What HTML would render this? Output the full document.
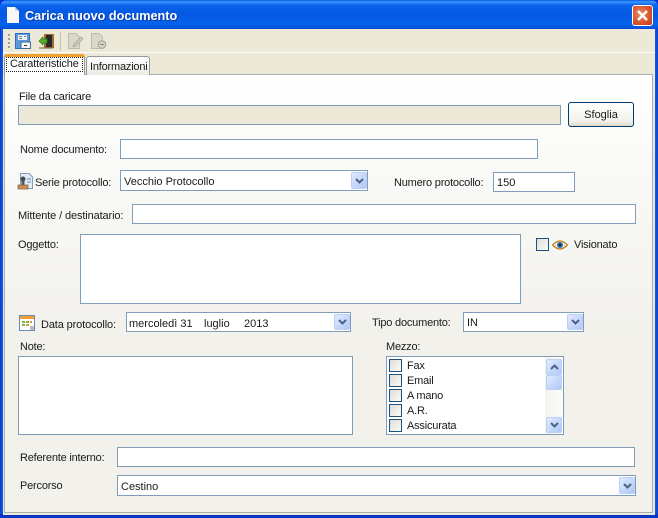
<!DOCTYPE html>
<html><head><meta charset="utf-8"><style>
html,body{margin:0;padding:0;width:658px;height:518px;overflow:hidden;background:#0831d9}
*{box-sizing:border-box}
body{position:relative;font:11px/14px "Liberation Sans",sans-serif;color:#1a1a1a}
.a{position:absolute}
.t{position:absolute;white-space:nowrap;letter-spacing:-.2px}
.i{position:absolute;background:#fff;border:1px solid #7f9db9}
.b{position:absolute;width:16px;background:linear-gradient(135deg,#e1eafe,#aec8f7);border:1px solid #bcd0f5;border-radius:2px}
.b svg{position:absolute;left:3px;top:50%;margin-top:-3px}
.c{position:absolute;width:13px;height:13px;border:1px solid #1c5180;background:linear-gradient(135deg,#dcdcd7,#fbfbf9)}
</style></head><body>
<div class="a" style="left:0;top:0;width:658px;height:30px;border-radius:7px 7px 0 0;background:linear-gradient(180deg,#0a5be0 0,#3d95ff 2px,#0a64ea 5px,#0558e2 14px,#0562ee 24px,#0553dc 28px,#0340c8 30px)"></div>
<div class="a" style="left:0;top:29px;width:4px;height:489px;background:linear-gradient(90deg,#0a3ed0,#1668f0)"></div>
<div class="a" style="left:654px;top:29px;width:4px;height:489px;background:linear-gradient(90deg,#1668f0,#0a3ed0)"></div>
<div class="a" style="left:0;top:514px;width:658px;height:4px;background:#0a36c4"></div>
<div class="a" style="left:3px;top:29px;width:652px;height:486px;background:#ece9d8"></div>
<svg class="a" style="left:6px;top:7px" width="14" height="17"><path d="M1 0H9L13 4V16H1Z" fill="#f8f8f8"/><path d="M9 0V4H13Z" fill="#c8d4ea"/></svg>
<div class="t" style="left:25px;top:9px;font:bold 12.7px/15px 'Liberation Sans',sans-serif;letter-spacing:0;color:#fff;text-shadow:1px 1px #0f3a9e">Carica nuovo documento</div>
<div class="a" style="left:632px;top:5px;width:21px;height:21px;border:1px solid #fff;border-radius:3px;background:radial-gradient(circle at 40% 40%,#e88a68,#d6532a 60%,#c03a18)"><svg width="19" height="19" style="position:absolute;left:0;top:0"><path d="M5 5L14 14M14 5L5 14" stroke="#fff" stroke-width="2.4"/></svg></div>
<!-- toolbar -->
<div class="a" style="left:3px;top:52px;width:652px;height:1px;background:#fbfaf5"></div>
<svg class="a" style="left:7px;top:33px" width="4" height="16"><g fill="#a09e8c"><rect x="1" y="1" width="2" height="2"/><rect x="1" y="5" width="2" height="2"/><rect x="1" y="9" width="2" height="2"/><rect x="1" y="13" width="2" height="2"/></g></svg>
<svg class="a" style="left:15px;top:33px" width="16" height="16"><rect x=".5" y=".5" width="14" height="15" fill="#5a9be0" stroke="#2a6fb8"/><rect x="3" y="2" width="9" height="5" fill="#eef3fa"/><path d="M4 3.500H7M9 3.500H11M4 5.500H7" stroke="#778"/><rect x="6" y="9" width="9.500" height="6.500" fill="#f4f4f4" stroke="#48688c"/><path d="M9 12.500H12" stroke="#334"/></svg>
<svg class="a" style="left:38px;top:33px" width="17" height="16"><rect x="6" y="1" width="10" height="14" fill="#a86a28"/><rect x="8" y="2" width="6" height="12" fill="#26282c"/><path d="M1 15H15" stroke="#7a5a38"/><path d="M1 8L5 4V6H9V10H5V12Z" fill="#55b02a" stroke="#2f7a16" stroke-width=".7"/></svg>
<div class="a" style="left:60px;top:32px;width:1px;height:19px;background:#c5c2b0"></div>
<svg class="a" style="left:67px;top:33px" width="17" height="16"><path d="M1.500.5H9L12.500 4V15.500H1.500Z" fill="#dad8cb" stroke="#bdbbab"/><path d="M7 11L14 4L16 6L9 13L6 14Z" fill="#cbc9ba" stroke="#aaa89a" stroke-width=".7"/></svg>
<svg class="a" style="left:90px;top:33px" width="17" height="16"><path d="M1.500.5H9L12.500 4V15.500H1.500Z" fill="#dad8cb" stroke="#bdbbab"/><circle cx="12" cy="11.500" r="3.800" fill="#d4d2c4" stroke="#a5a395"/><path d="M10 11.500H14" stroke="#8f8d80"/></svg>
<!-- panel -->
<div class="a" style="left:4px;top:74px;width:649px;height:439px;border:1px solid #a8b0b0;background:linear-gradient(180deg,#fff 0,#f9f9f7 100px,#f2f1ec 260px,#f2f1ec 100%)"></div>
<!-- tabs -->
<div class="a" style="left:86px;top:56px;width:64px;height:19px;border:1px solid #919b9c;border-bottom:none;border-radius:3px 3px 0 0;background:linear-gradient(180deg,#fff,#ecebe5)"></div>
<div class="t" style="left:90px;top:60px">Informazioni</div>
<div class="a" style="left:4px;top:54px;width:81px;height:21px;background:#fff;border:1px solid #919b9c;border-bottom:none;border-top:none;border-radius:3px 3px 0 0"></div>
<div class="a" style="left:4px;top:54px;width:81px;height:3px;background:#f0a030;border-radius:3px 3px 0 0"></div>
<div class="a" style="left:6px;top:57px;width:77px;height:15px;border:1px dotted #222"></div>
<div class="t" style="left:10px;top:57px;letter-spacing:-.15px">Caratteristiche</div>
<!-- fields -->
<div class="t" style="left:19px;top:90px">File da caricare</div>
<div class="i" style="left:18px;top:105px;width:543px;height:20px;background:#ece9d8"></div>
<div class="a" style="left:568px;top:102px;width:66px;height:25px;border:1px solid #003c74;border-radius:3px;background:linear-gradient(180deg,#fff,#f2f1ea 80%,#dcd8c8);text-align:center;line-height:24px">Sfoglia</div>
<div class="t" style="left:20px;top:143px">Nome documento:</div>
<div class="i" style="left:120px;top:139px;width:418px;height:20px"></div>
<svg class="a" style="left:17px;top:173px" width="16" height="17"><path d="M3.500.5H12L15.500 4V15.500H3.500Z" fill="#e4ecf8" stroke="#7f9db9"/><path d="M10 6H14M10 9H14" stroke="#5a8ac8"/><circle cx="6" cy="6" r="2.500" fill="#4a4a50"/><rect x="4.500" y="7" width="3" height="5" fill="#55555a"/><rect x="1" y="12" width="10" height="4" fill="#c89058" stroke="#8a5a28" stroke-width=".7"/></svg>
<div class="t" style="left:35px;top:176px">Serie protocollo:</div>
<div class="i" style="left:120px;top:170px;width:248px;height:21px"><div class="t" style="left:3px;top:4px;letter-spacing:0">Vecchio Protocollo</div><div class="b" style="left:230px;top:1px;height:17px"><svg width="9" height="6"><path d="M1 1L4.500 4.500L8 1" fill="none" stroke="#4d6185" stroke-width="2"/></svg></div></div>
<div class="t" style="left:394px;top:176px">Numero protocollo:</div>
<div class="i" style="left:493px;top:172px;width:82px;height:20px"><div class="t" style="left:3px;top:3px;letter-spacing:0">150</div></div>
<div class="t" style="left:18px;top:209px;letter-spacing:-.12px">Mittente / destinatario:</div>
<div class="i" style="left:132px;top:204px;width:504px;height:20px"></div>
<div class="t" style="left:18px;top:238px">Oggetto:</div>
<div class="i" style="left:80px;top:234px;width:441px;height:70px"></div>
<div class="c" style="left:536px;top:238px"></div>
<svg class="a" style="left:552px;top:239px" width="16" height="12"><path d="M.7 6Q8-2 15.300 6Q8 14 .7 6Z" fill="#f6efe0" stroke="#c08020" stroke-width="1.300"/><circle cx="8" cy="6" r="3" fill="#2f6aa0"/><circle cx="8" cy="6" r="1.200" fill="#123"/></svg>
<div class="t" style="left:574px;top:238px">Visionato</div>
<svg class="a" style="left:19px;top:315px" width="16" height="16"><rect x=".5" y=".5" width="15" height="15" fill="#fff" stroke="#6a8ab8"/><rect x="1" y="1" width="14" height="3" fill="#f0a030"/><g fill="#8ab04a"><rect x="3" y="6" width="3" height="2"/><rect x="7" y="6" width="3" height="2"/><rect x="3" y="9" width="3" height="2"/></g><g fill="#c9a832"><rect x="11" y="6" width="2" height="2"/><rect x="7" y="9" width="3" height="2"/></g><rect x="11" y="11" width="4" height="4" fill="#bbb"/></svg>
<div class="t" style="left:41px;top:318px;letter-spacing:-.13px">Data protocollo:</div>
<div class="i" style="left:126px;top:312px;width:225px;height:20px"><div class="t" style="left:2px;top:4px;letter-spacing:0">mercoledì 31</div><div class="t" style="left:77px;top:4px;letter-spacing:0">luglio</div><div class="t" style="left:117px;top:4px;letter-spacing:0">2013</div><div class="b" style="left:207px;top:1px;height:16px"><svg width="9" height="6"><path d="M1 1L4.500 4.500L8 1" fill="none" stroke="#4d6185" stroke-width="2"/></svg></div></div>
<div class="t" style="left:372px;top:316px">Tipo documento:</div>
<div class="i" style="left:463px;top:312px;width:121px;height:20px"><div class="t" style="left:3px;top:3px;letter-spacing:0">IN</div><div class="b" style="left:103px;top:1px;height:16px"><svg width="9" height="6"><path d="M1 1L4.500 4.500L8 1" fill="none" stroke="#4d6185" stroke-width="2"/></svg></div></div>
<div class="t" style="left:20px;top:340px">Note:</div>
<div class="i" style="left:18px;top:356px;width:335px;height:79px"></div>
<div class="t" style="left:386px;top:340px">Mezzo:</div>
<div class="i" style="left:386px;top:356px;width:178px;height:79px"></div>
<div class="c" style="left:389px;top:359px"></div><div class="t" style="left:407px;top:359px">Fax</div>
<div class="c" style="left:389px;top:374px"></div><div class="t" style="left:407px;top:374px">Email</div>
<div class="c" style="left:389px;top:389px"></div><div class="t" style="left:407px;top:389px">A mano</div>
<div class="c" style="left:389px;top:404px"></div><div class="t" style="left:407px;top:404px">A.R.</div>
<div class="c" style="left:389px;top:419px"></div><div class="t" style="left:407px;top:419px">Assicurata</div>
<div class="a" style="left:545px;top:357px;width:18px;height:77px;background:linear-gradient(90deg,#f3f2ec,#fdfdfb)"></div>
<div class="b" style="left:546px;top:359px;height:16px"><svg width="9" height="6"><path d="M1 5L4.500 1.500L8 5" fill="none" stroke="#4d6185" stroke-width="2"/></svg></div>
<div class="b" style="left:546px;top:375px;height:15px"></div>
<div class="b" style="left:546px;top:417px;height:16px"><svg width="9" height="6"><path d="M1 1L4.500 4.500L8 1" fill="none" stroke="#4d6185" stroke-width="2"/></svg></div>
<div class="t" style="left:20px;top:451px">Referente interno:</div>
<div class="i" style="left:117px;top:447px;width:518px;height:20px"></div>
<div class="t" style="left:20px;top:479px">Percorso</div>
<div class="i" style="left:117px;top:475px;width:519px;height:21px"><div class="t" style="left:3px;top:4px;letter-spacing:0">Cestino</div><div class="b" style="left:501px;top:1px;height:17px"><svg width="9" height="6"><path d="M1 1L4.500 4.500L8 1" fill="none" stroke="#4d6185" stroke-width="2"/></svg></div></div>
</body></html>
